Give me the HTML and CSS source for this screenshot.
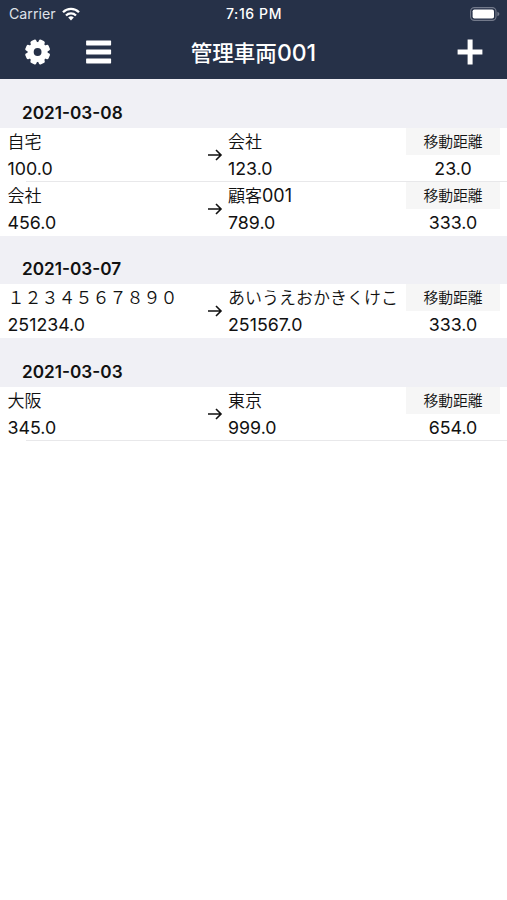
FILE: index.html
```html
<!DOCTYPE html>
<html lang="ja">
<head>
    <meta charset="UTF-8">
    <meta name="viewport" content="width=device-width, initial-scale=1.0">
    <title>管理車両001</title>
    <link rel="stylesheet" href="styles.css">
</head>
<body>
    <header class="top">
        <div class="status-bar">
            <div class="carrier">
                <span>Carrier</span>
                <svg class="wifi" viewBox="0 0 18 14" fill="none" stroke="#fff" stroke-width="2.3">
                    <path d="M1 5.2a11.4 11.4 0 0 1 16 0"/>
                    <path d="M4 8.5a7.1 7.1 0 0 1 10 0"/>
                    <path d="M9 13.4L6.2 10.6a4 4 0 0 1 5.6 0z" fill="#fff" stroke="none"/>
                </svg>
            </div>
            <div class="time">7:16 PM</div>
            <svg class="battery" viewBox="0 0 31 14">
                <rect x="1.6" y="0.6" width="25.4" height="12.8" rx="3.8" fill="none" stroke="#737a8b" stroke-width="1.1"/>
                <rect x="3.6" y="2.5" width="21.4" height="9" rx="1.8" fill="#fff"/>
                <path d="M28.4 4.8c2.6 1 2.6 3.4 0 4.4z" fill="#737a8b"/>
            </svg>
        </div>
        <nav class="nav-bar">
            <div class="nav-left">
                <svg class="icon" viewBox="0 0 26 26">
                    <g fill="#fff">
                        <circle cx="12.6" cy="13" r="10.1"/>
                        <rect x="9.4" y="0.4" width="6.4" height="25.2" rx="1.8" transform="rotate(22.5 12.6 13)"/>
                        <rect x="9.4" y="0.4" width="6.4" height="25.2" rx="1.8" transform="rotate(67.5 12.6 13)"/>
                        <rect x="9.4" y="0.4" width="6.4" height="25.2" rx="1.8" transform="rotate(112.5 12.6 13)"/>
                        <rect x="9.4" y="0.4" width="6.4" height="25.2" rx="1.8" transform="rotate(157.5 12.6 13)"/>
                    </g>
                    <circle cx="12.6" cy="13" r="3.9" fill="#263148"/>
                </svg>
                <svg class="icon" viewBox="0 0 26 26" fill="#fff">
                    <rect x="0.1" y="1.4" width="25" height="5" rx="0.6"/>
                    <rect x="0.1" y="10.4" width="25" height="5" rx="0.6"/>
                    <rect x="0.1" y="19.4" width="25" height="5" rx="0.6"/>
                </svg>
            </div>
            <h1>管理車両<span class="number">001</span></h1>
            <svg class="icon" viewBox="0 0 26 26" fill="#fff">
                <path d="M10.6 0.6h5v10h9.8v5h-9.8v9.8h-5v-9.8h-10v-5h10z"/>
            </svg>
        </nav>
    </header>

    <main>
        <section>
            <h2>2021-03-08</h2>
            <div class="row">
                <div class="place"><span class="name">自宅</span><span class="meter">100.0</span></div>
                <svg class="arrow" viewBox="0 0 16 14"><path d="M1 7h13M9 2l5 5-5 5"/></svg>
                <div class="place"><span class="name">会社</span><span class="meter">123.0</span></div>
                <div class="distance"><span class="label">移動距離</span><span class="meter">23.0</span></div>
            </div>
            <div class="row plain">
                <div class="place"><span class="name">会社</span><span class="meter">456.0</span></div>
                <svg class="arrow" viewBox="0 0 16 14"><path d="M1 7h13M9 2l5 5-5 5"/></svg>
                <div class="place"><span class="name">顧客<span class="latin">001</span></span><span class="meter">789.0</span></div>
                <div class="distance"><span class="label">移動距離</span><span class="meter">333.0</span></div>
            </div>
        </section>
        <section>
            <h2>2021-03-07</h2>
            <div class="row plain">
                <div class="place"><span class="name">１２３４５６７８９０</span><span class="meter">251234.0</span></div>
                <svg class="arrow" viewBox="0 0 16 14"><path d="M1 7h13M9 2l5 5-5 5"/></svg>
                <div class="place"><span class="name">あいうえおかきくけこ</span><span class="meter">251567.0</span></div>
                <div class="distance"><span class="label">移動距離</span><span class="meter">333.0</span></div>
            </div>
        </section>
        <section>
            <h2>2021-03-03</h2>
            <div class="row">
                <div class="place"><span class="name">大阪</span><span class="meter">345.0</span></div>
                <svg class="arrow" viewBox="0 0 16 14"><path d="M1 7h13M9 2l5 5-5 5"/></svg>
                <div class="place"><span class="name">東京</span><span class="meter">999.0</span></div>
                <div class="distance"><span class="label">移動距離</span><span class="meter">654.0</span></div>
            </div>
        </section>
    </main>
</body>
</html>
```
FILE: styles.css
```css
* {
    box-sizing: border-box;
}

body {
    margin: 0;
    background-color: #fff;
    color: #111;
    font-family: Inter, "Noto Sans CJK JP", sans-serif;
}

.top {
    height: 79px;
    background-color: #263148;
    color: #fff;
}

.status-bar {
    display: grid;
    grid-template-columns: 1fr auto 1fr;
    align-items: center;
    height: 27px;
    padding: 0 7px 0 9px;
    font-size: 14.2px;
}

.carrier {
    display: flex;
    align-items: center;
    gap: 6px;
    color: #dfe2e8;
}

.wifi {
    width: 18px;
    height: 14px;
}

.time {
    padding-right: 1px;
    font-size: 14px;
    font-weight: 500;
    letter-spacing: 0.6px;
}

.battery {
    width: 31px;
    height: 14px;
    justify-self: end;
}

.nav-bar {
    display: grid;
    grid-template-columns: 1fr auto 1fr;
    align-items: center;
    height: 50px;
    padding: 0 24px;
}

.nav-bar > .icon {
    justify-self: end;
}

.nav-left {
    display: flex;
    gap: 35px;
    padding-left: 1px;
}

.icon {
    width: 26px;
    height: 26px;
}

h1 {
    margin: 0;
    padding-top: 1px;
    font-size: 21.5px;
    line-height: 26px;
    font-weight: 500;
}

.number {
    font-size: 23px;
}

h2 {
    display: flex;
    align-items: flex-end;
    height: 48.5px;
    margin: 0;
    padding: 0 22px 5px;
    background-color: #f0f0f5;
    font-size: 17.2px;
    line-height: 20px;
    font-weight: 600;
}

/* separator starts slightly inside the left edge */
.row {
    display: grid;
    grid-template-columns: 199.5px 21px 178px 94px;
    height: 54px;
    padding-left: 7.5px;
    background: linear-gradient(#e8e8ea, #e8e8ea) 26px 100% / 100% 1px no-repeat;
}

.plain {
    background: none;
}

.place,
.distance {
    display: grid;
    grid-template-rows: 27px 27px;
    line-height: 27px;
    white-space: nowrap;
}

.name {
    padding-top: 1px;
    font-size: 17px;
    font-weight: 350;
}

.latin {
    font-size: 18px;
    font-weight: 400;
    line-height: 1;
}

.meter {
    font-size: 17.8px;
}

.arrow {
    align-self: center;
    width: 16px;
    height: 14px;
    fill: none;
    stroke: #111;
    stroke-width: 1.6;
}

.distance {
    text-align: center;
}

.label {
    padding-top: 1px;
    background-color: #f6f6f6;
    font-size: 14.8px;
    font-weight: 350;
}
```
